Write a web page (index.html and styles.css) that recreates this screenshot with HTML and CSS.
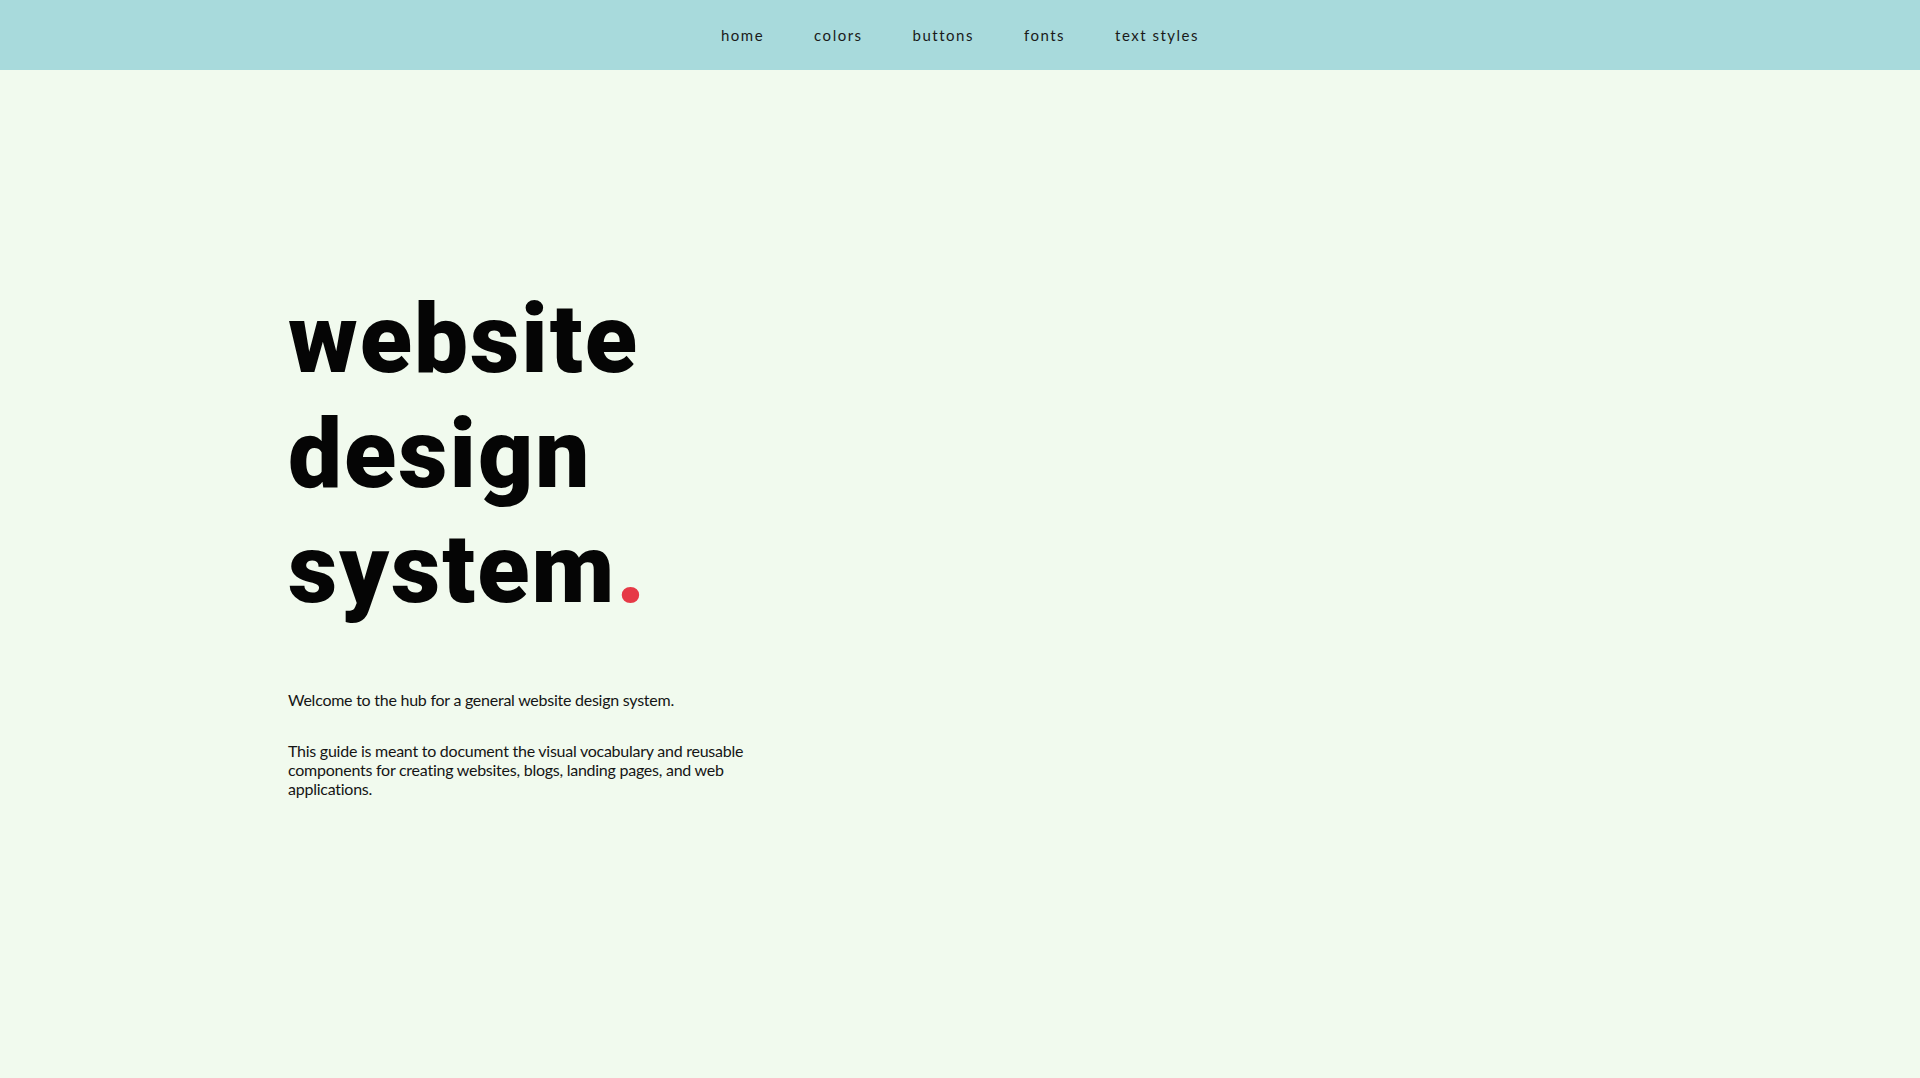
FILE: index.html
```html
<!DOCTYPE html>
<html lang="en">
<head>
<meta charset="utf-8">
<title>website design system</title>
<link rel="stylesheet" href="styles.css">
</head>
<body>
<header class="topbar">
  <nav class="nav">
    <a class="nav-link" href="#">home</a>
    <a class="nav-link" href="#">colors</a>
    <a class="nav-link" href="#">buttons</a>
    <a class="nav-link" href="#">fonts</a>
    <a class="nav-link" href="#">text styles</a>
  </nav>
</header>
<main class="hero">
  <h1 class="title">website<br>design<br>system<span class="dot">.</span></h1>
  <div class="intro">
    <p>Welcome to the hub for a general website design system.</p>
    <p>This guide is meant to document the visual vocabulary and reusable components for creating websites, blogs, landing pages, and web applications.</p>
  </div>
</main>
</body>
</html>
```
FILE: styles.css
```css
* { box-sizing: border-box; }
html, body { margin: 0; padding: 0; }
body {
  background: #f1faee;
  color: #111;
  font-family: "Lato", "Open Sans", sans-serif;
  min-height: 1078px;
}
.topbar {
  background: #a8dadc;
  height: 70px;
  display: flex;
  align-items: center;
  justify-content: center;
}
.nav {
  display: flex;
  gap: 50px;
  padding-bottom: 1px;
}
.nav-link {
  font-family: "Lato", sans-serif;
  font-size: 15px;
  letter-spacing: 1.5px;
  color: #1a1a1a;
  text-decoration: none;
}
.hero {
  padding: 212px 0 0 15%;
}
.title {
  margin: 0;
  font-family: "Roboto", sans-serif;
  font-weight: 900;
  font-size: 96px;
  line-height: 115px;
  letter-spacing: 2px;
  color: #050505;
}
.dot { color: #e63946; }
.intro {
  margin-top: 63px;
  max-width: 470px;
  font-size: 16px;
  line-height: 19px;
  letter-spacing: -0.25px;
  color: #151515;
}
.intro p { margin: 0 0 32px; }
```
